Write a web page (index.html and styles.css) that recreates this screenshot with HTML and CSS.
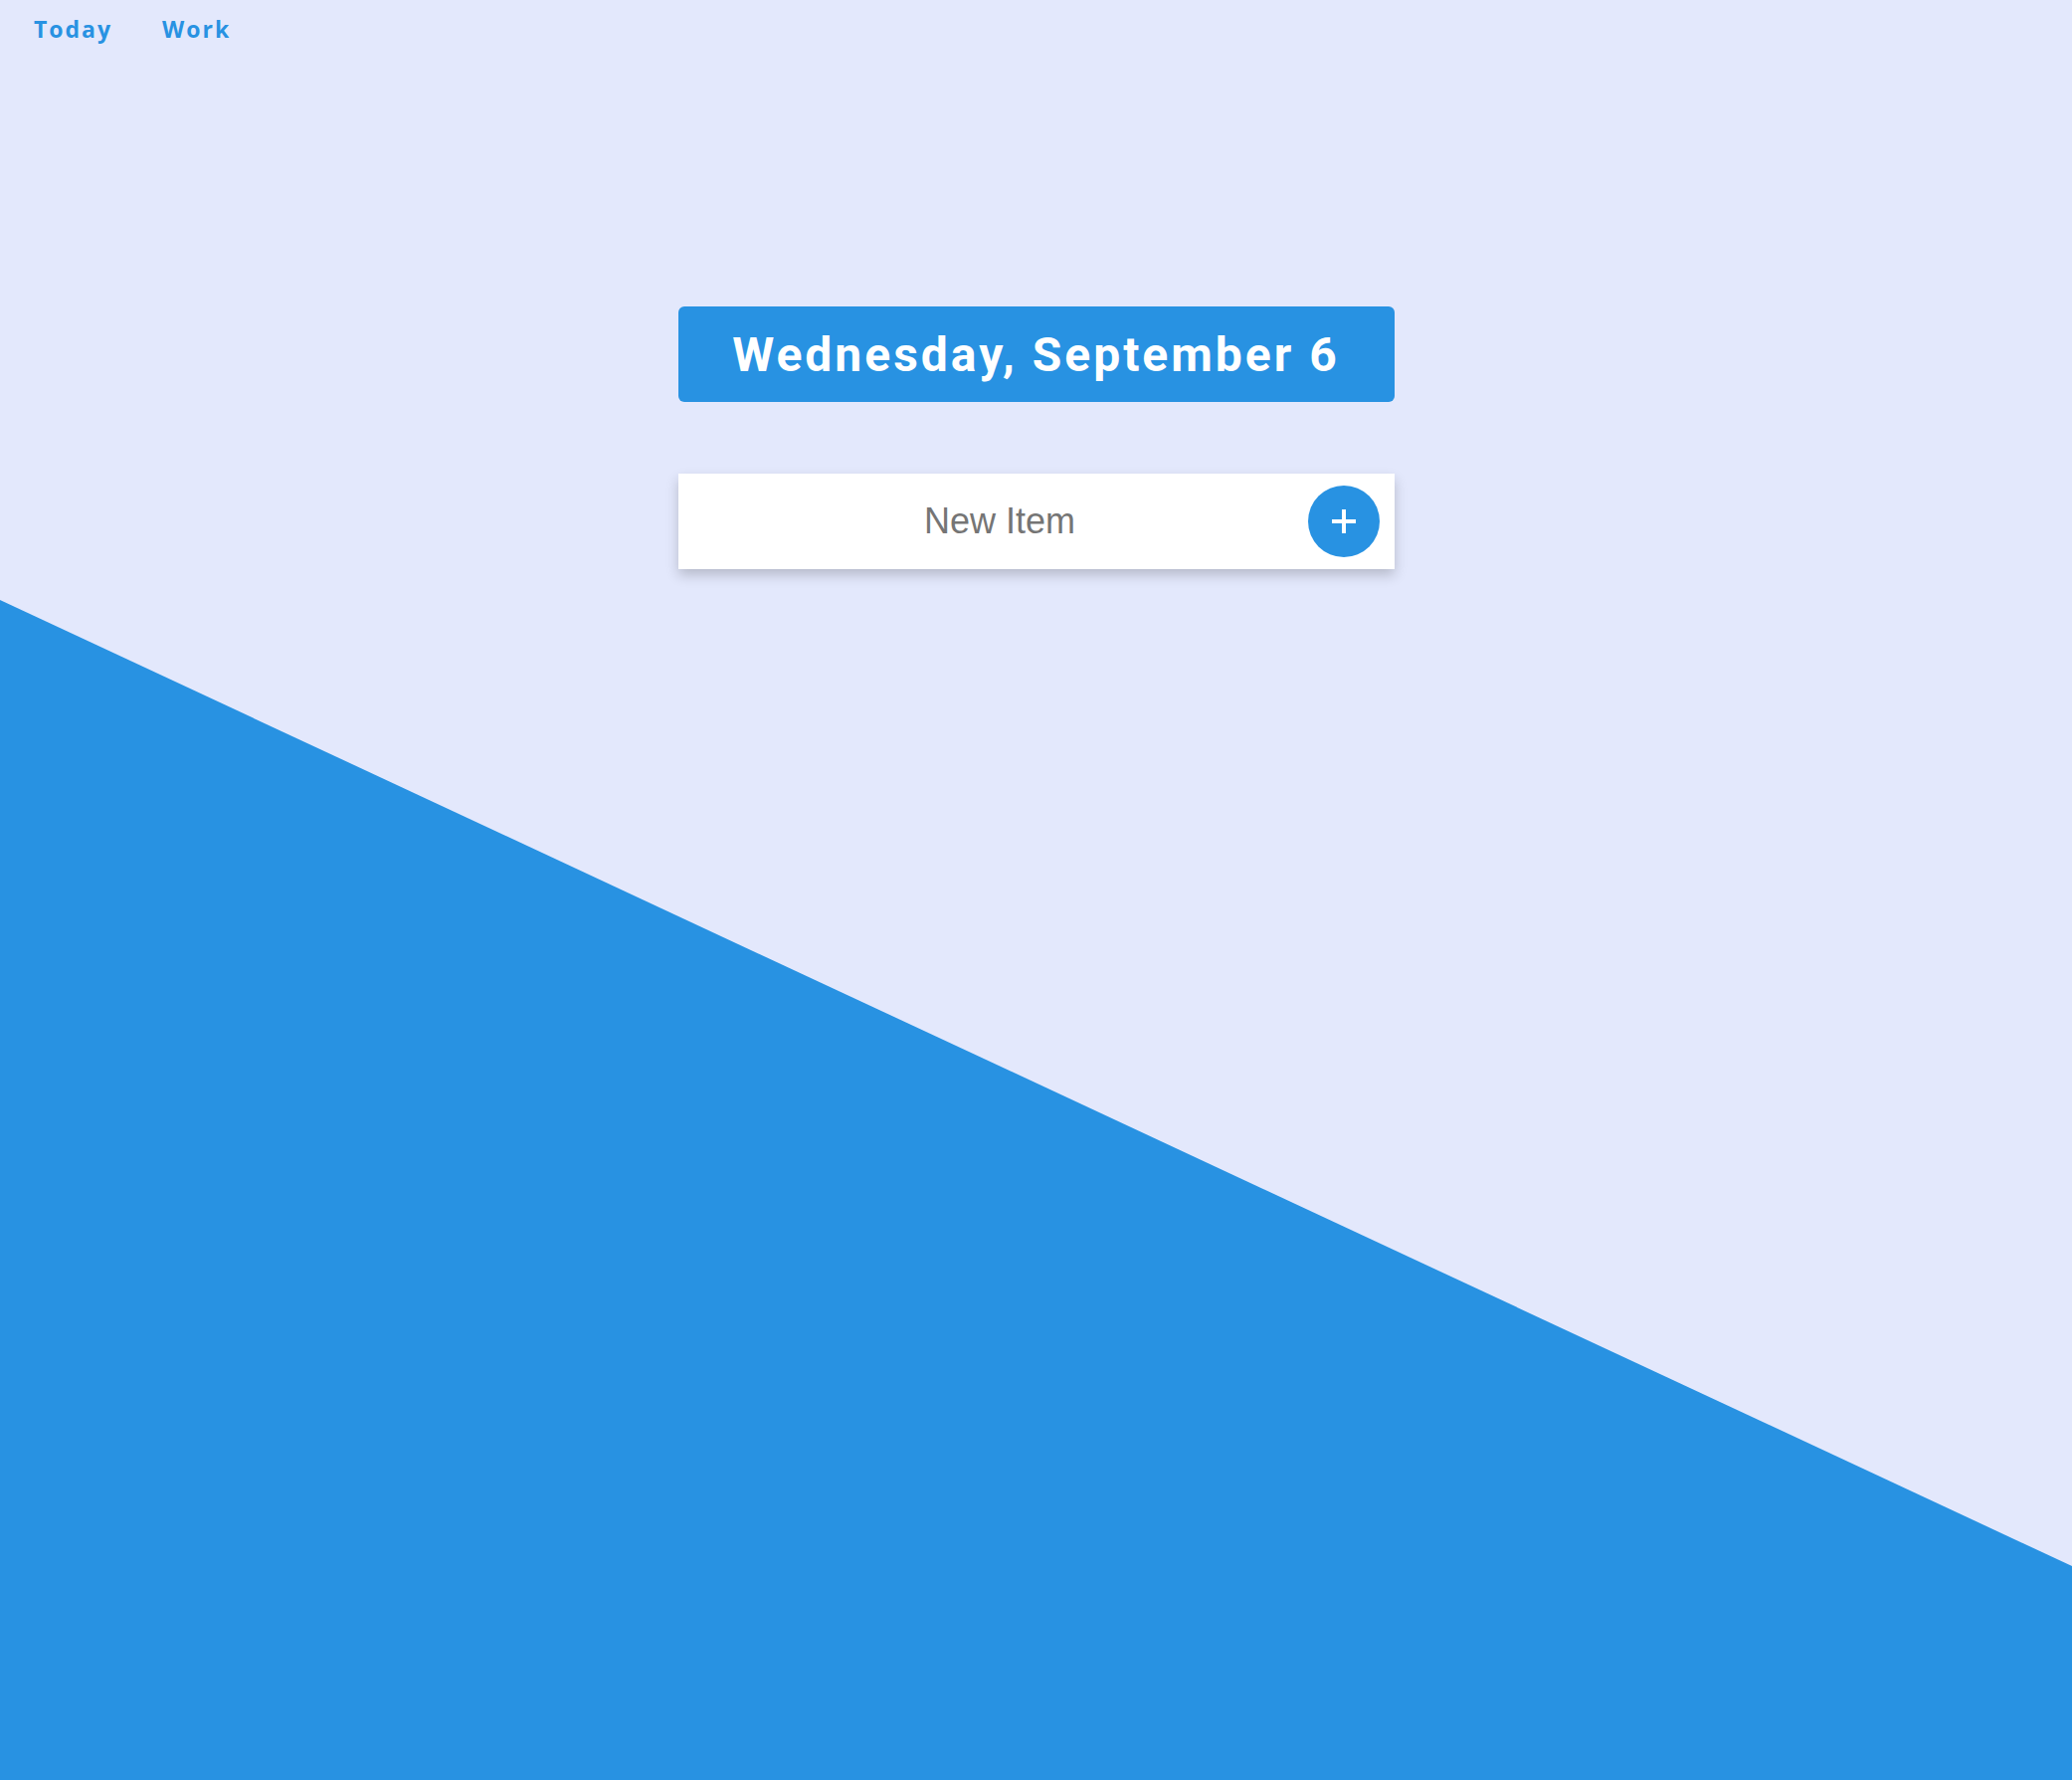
FILE: index.html
```html
<!DOCTYPE html>
<html lang="en">
<head>
<meta charset="utf-8">
<title>To Do List</title>
<link rel="stylesheet" href="styles.css">
</head>
<body>
<div class="backdrop"></div>
<nav class="nav">
  <a class="nav-link" href="#">Today</a>
  <a class="nav-link" href="#">Work</a>
</nav>
<main class="main">
  <div class="heading-box">
    <h1 class="heading">Wednesday, September 6</h1>
  </div>
  <form class="item-form">
    <input class="item-input" type="text" placeholder="New Item">
    <button class="add-btn" type="button" aria-label="Add"><span class="plus"></span></button>
  </form>
</main>
</body>
</html>
```
FILE: styles.css
```css
html, body {
  margin: 0;
  padding: 0;
}
body {
  background: #e3e8fc;
  min-height: 100vh;
  position: relative;
  overflow: hidden;
  font-family: "Roboto", "Liberation Sans", sans-serif;
}
.backdrop {
  position: absolute;
  inset: 0;
  background: #2892e2;
  clip-path: polygon(0 603px, 100% 1574px, 100% 100%, 0 100%);
  z-index: 0;
}
.nav {
  position: relative;
  z-index: 1;
  display: flex;
  gap: 50px;
  padding: 14px 0 0 34px;
}
.nav-link {
  font-family: "Open Sans", "Noto Sans", sans-serif;
  font-weight: 700;
  font-size: 23px;
  letter-spacing: 2px;
  color: #2892e2;
  text-decoration: none;
  line-height: 30px;
}
.main {
  position: relative;
  z-index: 1;
  display: flex;
  flex-direction: column;
  align-items: center;
  padding-top: 264px;
}
.heading-box {
  width: 720px;
  height: 96px;
  background: #2892e2;
  border-radius: 6px;
  display: flex;
  align-items: center;
  justify-content: center;
}
.heading {
  margin: 0;
  color: #ffffff;
  font-family: "Roboto", sans-serif;
  font-weight: 700;
  font-size: 48px;
  letter-spacing: 3px;
  line-height: 1;
  padding-top: 2px;
}
.item-form {
  margin-top: 72px;
  width: 720px;
  height: 96px;
  background: #ffffff;
  box-shadow: 0 6px 12px rgba(0, 0, 0, 0.2);
  display: flex;
  align-items: center;
  box-sizing: border-box;
  padding-right: 15px;
}
.item-input {
  flex: 1;
  min-width: 0;
  border: none;
  outline: none;
  background: transparent;
  text-align: center;
  font-family: "Liberation Sans", Arial, sans-serif;
  font-size: 36px;
  color: #333;
  padding: 0 0 0 14px;
  height: 60px;
}
.item-input::placeholder {
  color: #757575;
}
.add-btn {
  width: 72px;
  height: 72px;
  border-radius: 50%;
  border: none;
  background: #2892e2;
  padding: 0;
  display: flex;
  align-items: center;
  justify-content: center;
  cursor: pointer;
}
.plus {
  position: relative;
  width: 24px;
  height: 24px;
  display: block;
}
.plus::before, .plus::after {
  content: "";
  position: absolute;
  background: #ffffff;
}
.plus::before {
  left: 0;
  right: 0;
  top: 10px;
  height: 4px;
}
.plus::after {
  top: 0;
  bottom: 0;
  left: 10px;
  width: 4px;
}
```
